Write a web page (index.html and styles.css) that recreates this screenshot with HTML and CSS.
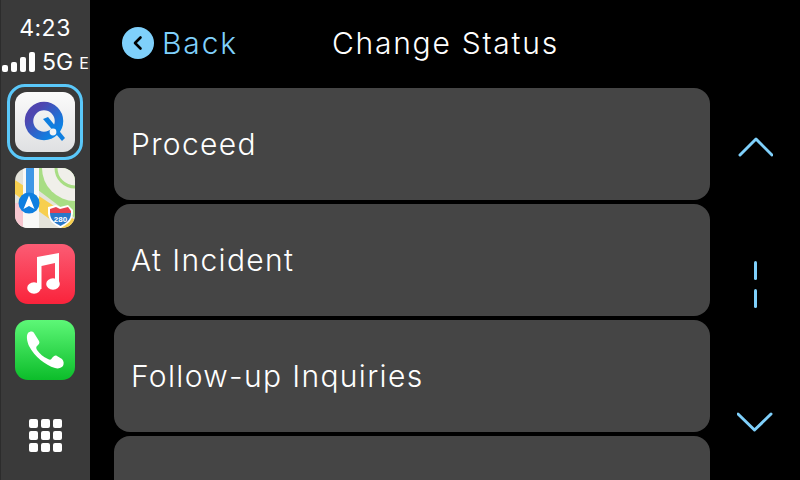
FILE: index.html
```html
<!DOCTYPE html>
<html lang="en">
<head>
  <meta charset="UTF-8">
  <meta name="viewport" content="width=device-width, initial-scale=1.0">
  <title>Change Status</title>
  <link rel="stylesheet" href="styles.css">
</head>
<body>
  <aside class="dock">
    <div class="clock">4:23</div>
    <div class="signal">
      <span class="bars"><i class="b1"></i><i class="b2"></i><i class="b3"></i><i class="b4"></i></span>
      <span class="net">5G</span><span class="net-e">E</span>
    </div>
    <div class="app-active">
      <svg class="app-q" width="60" height="60" viewBox="0 0 60 60">
        <defs>
          <linearGradient id="qbg" x1="0" y1="0" x2="0" y2="1"><stop offset="0" stop-color="#fbfbfb"/><stop offset="1" stop-color="#dfe0e2"/></linearGradient>
          <linearGradient id="qring" x1="0" y1="0" x2="1" y2="1"><stop offset="0.2" stop-color="#4f46b0"/><stop offset="0.9" stop-color="#0a84e6"/></linearGradient>
        </defs>
        <rect width="60" height="60" rx="12" fill="url(#qbg)"/>
        <circle cx="29" cy="29" r="15" fill="none" stroke="url(#qring)" stroke-width="8.5"/>
        <path d="M28 27 L33 25 L50 46 L47 49 Z" fill="#0f7fe0"/>
        <circle cx="38" cy="40" r="3.4" fill="#f2f3f4"/>
      </svg>
    </div>
    <svg class="app app-maps" width="60" height="60" viewBox="0 0 60 60">
      <defs><clipPath id="mapclip"><rect width="60" height="60" rx="13"/></clipPath></defs>
      <g clip-path="url(#mapclip)">
        <rect width="60" height="60" fill="#e4e3da"/>
        <path d="M23 0 H60 V50 L23 22 Z" fill="#a8dd84"/>
        <circle cx="60" cy="0" r="33" fill="#f0efea"/>
        <circle cx="60" cy="0" r="19" fill="none" stroke="#a8dd84" stroke-width="3"/>
        <path d="M0 12 L60 52 V60 H47 L0 26 Z" fill="#f7cf4e"/>
        <rect y="35" width="8" height="25" fill="#f6c6cf"/>
        <rect x="8" width="16" height="60" fill="#f8f8f6"/>
        <rect x="11" width="8" height="36" fill="#3f97e6"/>
        <circle cx="14" cy="35" r="10.500" fill="#0e7fe0"/>
        <path d="M14 27.500 L19.500 41 L14 38 L8.500 41 Z" fill="#fff"/>
        <path d="M33 39 L41 37 L45 39 L53 37 L58 42 C59 52 52 57 45.500 60 C39 57 32 52 33 42 Z" fill="#fff"/>
        <path d="M35 41 L41 39 L45 41 L53 39 L56 43 V45 H35 Z" fill="#e8414f"/>
        <path d="M35 45 H56 C56 52 51 55 45.500 58 C40 55 35 52 35 45 Z" fill="#2a78c8"/>
        <text x="45.500" y="54" class="shield">280</text>
      </g>
    </svg>
    <svg class="app" width="60" height="60" viewBox="0 0 60 60">
      <defs><linearGradient id="musicbg" x1="0" y1="0" x2="0" y2="1"><stop offset="0" stop-color="#fb5c74"/><stop offset="1" stop-color="#fa233b"/></linearGradient></defs>
      <rect width="60" height="60" rx="13" fill="url(#musicbg)"/>
      <path d="M22 13 L44 9 V41 H40 V19 L26.500 22 V45 H22 Z" fill="#fff"/>
      <ellipse cx="19" cy="44" rx="6.800" ry="5.800" fill="#fff"/>
      <ellipse cx="38" cy="40" rx="6.800" ry="5.800" fill="#fff"/>
    </svg>
    <svg class="app" width="60" height="60" viewBox="0 0 60 60">
      <defs><linearGradient id="phonebg" x1="0" y1="0" x2="0" y2="1"><stop offset="0" stop-color="#5df777"/><stop offset="1" stop-color="#0cbd2a"/></linearGradient></defs>
      <rect width="60" height="60" rx="13" fill="url(#phonebg)"/>
      <path d="M13 13 C15 11 18 11 19 13 L24 21 C25 23 24 24 22 26 C21 27 21 28 22 30 C25 34 28 37 33 39 C35 40 36 40 37 38 C39 36 40 35 42 36 L47 39 C49 41 49 44 48 46 C46 48 43 49 40 48 C30 45 20 37 14 26 C12 21 11 16 13 13 Z" fill="#fff"/>
    </svg>
    <div class="grid-btn">
      <i></i><i></i><i></i><i></i><i></i><i></i><i></i><i></i><i></i>
    </div>
  </aside>

  <main class="content">
    <header class="topbar">
      <div class="back">
        <span class="back-dot">
          <svg width="16" height="18" viewBox="0 0 16 18"><path d="M10.500 3.500 L5 9 L10.500 14.500" fill="none" stroke="#000" stroke-width="2.600" stroke-linecap="round" stroke-linejoin="round"/></svg>
        </span>
        <span class="back-label">Back</span>
      </div>
      <h1 class="title">Change Status</h1>
    </header>
    <div class="body">
      <div class="list">
        <div class="row">Proceed</div>
        <div class="row">At Incident</div>
        <div class="row">Follow-up Inquiries</div>
        <div class="row">Patient Contact</div>
      </div>
      <div class="scroller">
        <svg width="36" height="20" viewBox="0 0 36 20"><path d="M3 18 L19 2 L35 18" fill="none" stroke="#7fd0fb" stroke-width="3" stroke-linecap="round" stroke-linejoin="round"/></svg>
        <div class="ticks"><i></i><i></i></div>
        <svg width="36" height="20" viewBox="0 0 36 20"><path d="M1 2 L17.500 18 L34 2" fill="none" stroke="#7fd0fb" stroke-width="3" stroke-linecap="round" stroke-linejoin="round"/></svg>
      </div>
    </div>
  </main>
</body>
</html>
```

FILE: styles.css
```css
* {
  box-sizing: border-box;
}
html, body {
  height: 100%;
}
body {
  margin: 0;
  display: flex;
  width: 800px;
  height: 480px;
  overflow: hidden;
  background-color: #000;
  color: #fff;
  font-family: Inter, "Liberation Sans", sans-serif;
}
.dock {
  width: 90px;
  flex: none;
  display: flex;
  flex-direction: column;
  align-items: center;
  padding-top: 14px;
  background-color: #3a3a3a;
  box-shadow: inset 1px 0 #2c2c2c;
}
.clock {
  font-size: 23px;
  font-weight: 400;
  line-height: 28px;
  letter-spacing: 0.5px;
}
.signal {
  display: flex;
  align-items: flex-end;
  height: 24px;
  margin-top: 8px;
  width: 86px;
}
.bars {
  display: flex;
  align-items: flex-end;
  gap: 3px;
  margin-right: 7px;
  margin-bottom: 2px;
}
.bars i {
  display: block;
  width: 6px;
  background-color: #fff;
  border-radius: 2px;
}
.b1 { height: 7px; }
.b2 { height: 10px; }
.b3 { height: 15px; }
.b4 { height: 20px; }
.net {
  font-size: 23px;
  line-height: 24px;
}
.net-e {
  font-size: 16px;
  line-height: 21px;
  margin-left: 6px;
}
.app-active {
  width: 76px;
  height: 76px;
  margin-top: 10px;
  padding: 5px;
  border: 3px solid #5ac8fa;
  border-radius: 18px;
}
.app-q {
  display: block;
}
.app {
  display: block;
  flex: none;
  margin-top: 16px;
}
.app-maps {
  margin-top: 8px;
}
.shield {
  font-family: "Liberation Sans", sans-serif;
  font-size: 8px;
  font-weight: bold;
  fill: #fff;
  text-anchor: middle;
}
.grid-btn {
  display: grid;
  grid-template-columns: repeat(3, 9px);
  grid-auto-rows: 9px;
  gap: 3px;
  margin-top: 39px;
}
.grid-btn i {
  background-color: #fff;
  border-radius: 2px;
}
.content {
  flex: 1;
  min-width: 0;
}
.topbar {
  display: flex;
  align-items: center;
  height: 88px;
  padding: 0 0 2px 32px;
}
.back {
  display: flex;
  align-items: center;
  gap: 8px;
  color: #7fd0fb;
}
.back-dot {
  width: 32px;
  height: 32px;
  display: flex;
  align-items: center;
  justify-content: center;
  border-radius: 50%;
  background-color: #7fd0fb;
}
.back-label {
  font-size: 30px;
  font-weight: 300;
  letter-spacing: 1.85px;
}
.title {
  margin: 0 0 0 94px;
  font-size: 30px;
  font-weight: 300;
  letter-spacing: 1.75px;
}
.body {
  display: flex;
}
.list {
  width: 596px;
  margin-left: 24px;
  display: flex;
  flex-direction: column;
  gap: 4px;
}
.row {
  flex: none;
  height: 112px;
  display: flex;
  align-items: center;
  padding-left: 17px;
  background-color: #454545;
  border-radius: 16px;
  font-size: 30px;
  font-weight: 300;
  letter-spacing: 1.35px;
}
.scroller {
  flex: 1;
  height: 295px;
  margin-top: 49px;
  display: flex;
  flex-direction: column;
  align-items: center;
  justify-content: space-between;
}
.ticks {
  display: flex;
  flex-direction: column;
  gap: 9px;
}
.ticks i {
  display: block;
  width: 3px;
  height: 19px;
  background-color: #7fd0fb;
  border-radius: 1.500px;
}
```
